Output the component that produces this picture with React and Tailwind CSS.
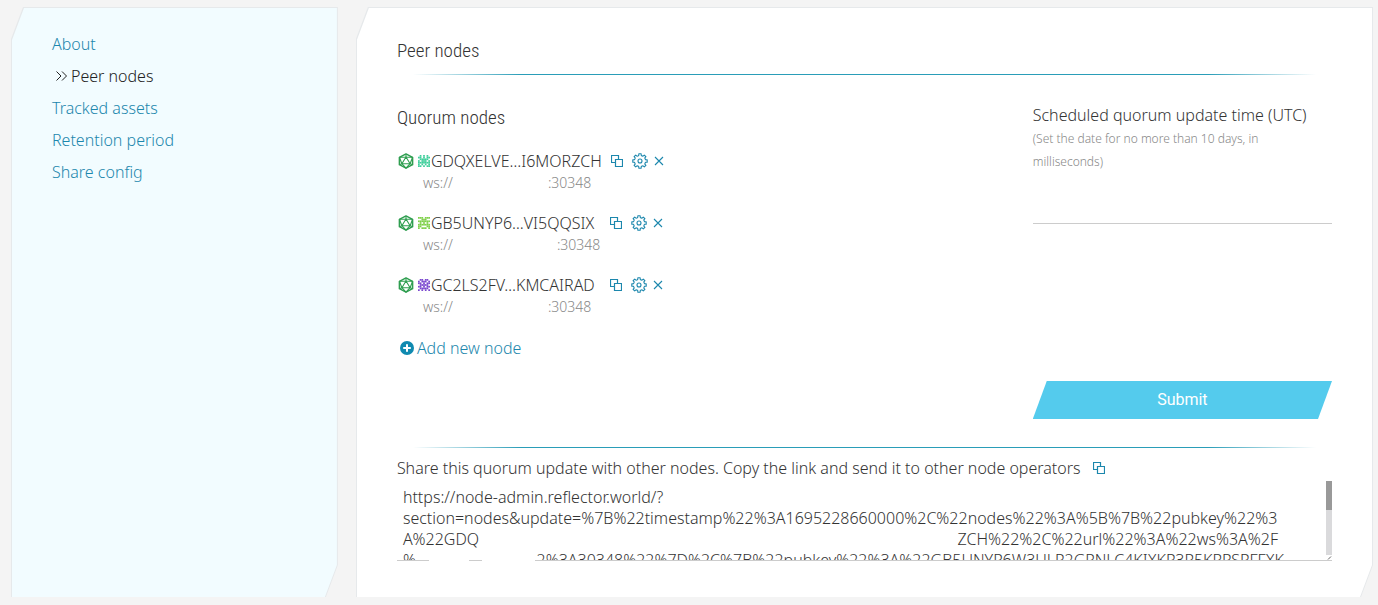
import React from "react";

const NAV = [
  { label: "About" },
  { label: "Peer nodes", active: true },
  { label: "Tracked assets" },
  { label: "Retention period" },
  { label: "Share config" },
];

const NODES = [
  {
    name: "GDQXELVE…I6MORZCH",
    hostWidth: "w-[95px]",
    color: "#3fcf9b",
    cells: ["0101010", "1101011", "0111110", "1011101", "1111111", "1010101", "1101011"],
  },
  {
    name: "GB5UNYP6…VI5QQSIX",
    hostWidth: "w-[104px]",
    color: "#7fd04a",
    cells: ["1110111", "0011100", "1111111", "0101010", "1111111", "1100011", "1011101"],
  },
  {
    name: "GC2LS2FV…KMCAIRAD",
    hostWidth: "w-[95px]",
    color: "#7a48cf",
    cells: ["0110110", "1011101", "1101011", "0111110", "1101011", "0111110", "1010101"],
  },
];

const blank = (n) => "\u00a0".repeat(n);

const SHARE_LINK = [
  "https://node-admin.reflector.world/?",
  "section=nodes&update=%7B%22timestamp%22%3A1695228660000%2C%22nodes%22%3A%5B%7B%22pubkey%22%3",
  "A%22GDQ" + blank(115) + "ZCH%22%2C%22url%22%3A%22ws%3A%2F",
  "%" + blank(29) + "2%3A30348%22%7D%2C%7B%22pubkey%22%3A%22GB5UNYP6W3ULP2GPNLC4KIXKP3P5KPPSPFFXK",
].join("\n");

function NodeIcon() {
  return (
    <svg viewBox="0 0 16 16" className="size-4 shrink-0" fill="none" stroke="#2f9e50" strokeWidth="1.1" strokeLinejoin="round" aria-hidden="true">
      <path d="M8 .9 14.600 4.300v7.400L8 15.100 1.400 11.700V4.300z" strokeWidth="1.5" />
      <path d="M8 4 12.100 10.700H3.900z" />
      <path d="M8 .9V4M1.400 4.300 8 4l6.600.3M1.400 4.300l2.500 6.400M14.600 4.300l-2.500 6.400M1.400 11.700l2.500-1M14.600 11.700l-2.500-1M3.900 10.700 8 15.100l4.100-4.400" />
    </svg>
  );
}

function Identicon({ cells, color }) {
  return (
    <svg viewBox="0 0 7 7" className="ml-1 size-3 shrink-0" fill={color} aria-hidden="true">
      {cells.flatMap((row, y) =>
        [...row].map((on, x) => (on === "1" ? <rect key={`${x}-${y}`} x={x} y={y} width="1" height="1" /> : null))
      )}
    </svg>
  );
}

function CopyIcon() {
  return (
    <svg viewBox="0 0 12 12" className="size-3" fill="none" stroke="currentColor" strokeWidth="1.2" aria-hidden="true">
      <path d="M4.500 7.500h-4v-7h7v4" />
      <path d="M4.500 4.500h7v7h-7z" />
    </svg>
  );
}

const GEAR = Array.from({ length: 8 }, (_, i) => {
  const p = (r, deg) => {
    const a = ((i * 45 + deg - 90) * Math.PI) / 180;
    return `${(8 + r * Math.cos(a)).toFixed(2)} ${(8 + r * Math.sin(a)).toFixed(2)}`;
  };
  return `${i ? "L" : "M"}${p(5.7, -13)}L${p(7.3, -9)}L${p(7.3, 9)}L${p(5.7, 13)}L${p(5.5, 22)}`;
}).join("") + "Z";

function GearIcon() {
  return (
    <svg viewBox="0 0 16 16" className="size-4" fill="none" stroke="currentColor" strokeWidth="1.1" strokeLinejoin="round" aria-hidden="true">
      <path d={GEAR} />
      <circle cx="8" cy="8" r="2" />
    </svg>
  );
}

function CloseIcon() {
  return (
    <svg viewBox="0 0 10 10" className="size-[10px]" fill="none" stroke="currentColor" strokeWidth="1.1" aria-hidden="true">
      <path d="M1 1l8 8M9 1 1 9" />
    </svg>
  );
}

function Panel({ as: Tag, tint, className, children }) {
  const shape = "[clip-path:polygon(12px_0,100%_0,100%_calc(100%-32px),calc(100%-12px)_100%,0_100%,0_32px)]";
  return (
    <Tag className={`flex bg-[#e6e9eb] px-px pt-px ${shape} ${className}`}>
      <div className={`min-w-0 flex-1 ${shape} ${tint}`}>{children}</div>
    </Tag>
  );
}

function Divider() {
  return <div className="mx-4 h-px bg-[linear-gradient(to_right,transparent,#2a9db8_12%,#2a9db8_88%,transparent)]" />;
}

export default function App() {
  return (
    <div className="flex min-h-screen gap-[18px] bg-[#f4f4f4] pt-[7px] pr-[5px] pb-2 pl-[11px] font-['Noto_Sans',sans-serif] text-base leading-6 font-light text-[#333]">
      <Panel as="aside" tint="bg-[#f2fcff]" className="w-[24%] shrink-0">
        <nav className="flex flex-col gap-2 px-10 pt-6">
          {NAV.map(({ label, active }) => (
            <a
              key={label}
              href="#"
              aria-current={active ? "page" : undefined}
              className={active ? "flex items-center gap-1 pl-1 text-[#222]" : "text-[#1c87ad]"}
            >
              {active && (
                <svg viewBox="0 0 11 10" className="h-[10px] w-[11px]" fill="none" stroke="currentColor" aria-hidden="true">
                  <path d="M.5 .5 5 5 .5 9.500M6 .5 10.500 5 6 9.500" />
                </svg>
              )}
              {label}
            </a>
          ))}
        </nav>
      </Panel>

      <Panel as="main" tint="bg-white" className="min-w-0 flex-1">
        <div className="px-10 pt-[30px] pb-9">
          <h1 className="font-['Roboto_Condensed',sans-serif] text-[19px] leading-[26px]">Peer nodes</h1>
          <div className="pt-[10px]">
            <Divider />
          </div>

          <div className="flex items-stretch justify-between pt-7">
            <section>
              <h2 className="pt-[2px] font-['Roboto_Condensed',sans-serif] text-[19px] leading-[26px]">Quorum nodes</h2>
              <ul className="flex flex-col gap-[18px] pt-[18px]">
                {NODES.map((node) => (
                  <li key={node.name}>
                    <div className="flex h-6 items-center pl-px">
                      <NodeIcon />
                      <Identicon cells={node.cells} color={node.color} />
                      <span className="min-w-[171px] pl-px">{node.name}</span>
                      <span className="flex items-center pl-[9px] text-[#1c87ad]">
                        <button type="button" aria-label="Copy address"><CopyIcon /></button>
                        <button type="button" aria-label="Configure node" className="ml-[9px]"><GearIcon /></button>
                        <button type="button" aria-label="Remove node" className="ml-[6px]"><CloseIcon /></button>
                      </span>
                    </div>
                    <div className="flex pl-[26px] text-sm leading-5 text-[#888]">
                      <span>ws://</span>
                      <span className={node.hostWidth} />
                      <span>:30348</span>
                    </div>
                  </li>
                ))}
              </ul>
              <button type="button" className="mt-[19px] flex items-center gap-[3px] pl-[3px] text-[#1c87ad]">
                <svg viewBox="0 0 14 14" className="size-[14px]" aria-hidden="true">
                  <circle cx="7" cy="7" r="7" fill="#108ab0" />
                  <path d="M7 3.200v7.600M3.200 7h7.600" stroke="#fff" strokeWidth="2" />
                </svg>
                Add new node
              </button>
            </section>

            <form className="flex w-[32%] flex-col" onSubmit={(e) => e.preventDefault()}>
              <label htmlFor="update-time">
                Scheduled quorum update time (UTC)
                <small className="block pr-8 text-xs leading-[23px] text-[#888]">
                  (Set the date for no more than 10 days, in milliseconds)
                </small>
              </label>
              <input id="update-time" type="text" className="mt-2 h-[43px] w-full border-b border-[#ccc] bg-transparent outline-none" />
              <button
                type="submit"
                className="mt-[157px] h-[38px] bg-[#54cbed] pb-px text-center font-['Roboto',sans-serif] font-normal text-white [clip-path:polygon(14px_0,100%_0,calc(100%-14px)_100%,0_100%)]"
              >
                Submit
              </button>
            </form>
          </div>

          <div className="pt-7">
            <Divider />
          </div>
          <div className="flex items-center gap-3 pt-2">
            <label htmlFor="share-link">
              Share this quorum update with other nodes. Copy the link and send it to other node operators
            </label>
            <button type="button" aria-label="Copy link" className="text-[#1c87ad]"><CopyIcon /></button>
          </div>
          <div className="relative mt-px">
            <textarea
              id="share-link"
              readOnly
              value={SHARE_LINK}
              className="block h-20 w-full resize-none overflow-hidden border-b border-[#ccc] bg-transparent px-[6px] pt-[6px] leading-[21px] whitespace-pre outline-none"
            />
            <span className="absolute bottom-0 left-8 h-px w-10 bg-white" />
            <span className="absolute bottom-0 left-[85px] h-px w-[53px] bg-white" />
            <span className="absolute top-0 right-0 flex h-[79px] w-[6px] flex-col bg-white">
              <span className="h-[29px] bg-[#999]" />
              <span className="flex-1 bg-[#dadadc]" />
              <svg viewBox="0 0 6 5" className="h-[5px] w-[6px]" stroke="#666" aria-hidden="true">
                <path d="M2 4.500 5 1.500" />
              </svg>
            </span>
          </div>
        </div>
      </Panel>
    </div>
  );
}
